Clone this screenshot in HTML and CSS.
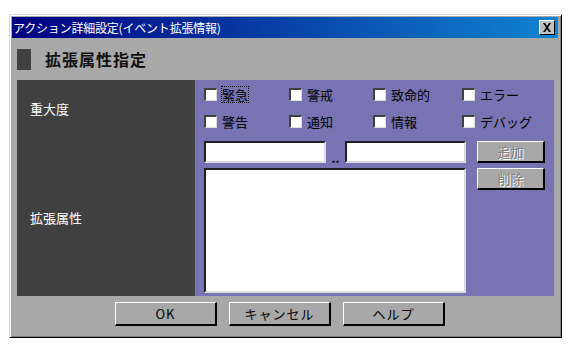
FILE: index.html
```html
<!DOCTYPE html>
<html lang="ja">
<head>
    <meta charset="UTF-8">
    <title>アクション詳細設定(イベント拡張情報)</title>
    <link rel="stylesheet" href="styles.css">
</head>
<body>
    <div class="dialog">
        <div class="titlebar">
            <span class="title">アクション詳細設定(イベント拡張情報)</span>
            <span class="close">
                <svg width="10" height="9" viewBox="0 0 10 9"><path d="M1 0h2l2 3 2-3h2L6 4.5 9 9H7L5 6 3 9H1l3-4.5z" fill="#000"/></svg>
            </span>
        </div>
        <div class="section-head">
            <span class="marker"></span>
            <span class="section-title">拡張属性指定</span>
        </div>
        <div class="table">
            <div class="row row-severity">
                <div class="label">重大度</div>
                <div class="cell checks">
                    <label class="check"><span class="box"></span><span class="focus">緊急</span></label>
                    <label class="check"><span class="box"></span><span>警戒</span></label>
                    <label class="check"><span class="box"></span><span>致命的</span></label>
                    <label class="check"><span class="box"></span><span>エラー</span></label>
                    <label class="check"><span class="box"></span><span>警告</span></label>
                    <label class="check"><span class="box"></span><span>通知</span></label>
                    <label class="check"><span class="box"></span><span>情報</span></label>
                    <label class="check"><span class="box"></span><span>デバッグ</span></label>
                </div>
            </div>
            <div class="row row-attr">
                <div class="label">拡張属性</div>
                <div class="cell attr">
                    <div class="fields">
                        <div class="range">
                            <span class="field input-a"></span>
                            <span class="dots">..</span>
                            <span class="field input-b"></span>
                        </div>
                        <div class="field list"></div>
                    </div>
                    <div class="side-buttons">
                        <button class="btn small" disabled>追加</button>
                        <button class="btn small" disabled>削除</button>
                    </div>
                </div>
            </div>
        </div>
        <div class="footer">
            <button class="btn wide">OK</button>
            <button class="btn wide">キャンセル</button>
            <button class="btn wide">ヘルプ</button>
        </div>
    </div>
</body>
</html>
```

FILE: styles.css
```css
body {
    margin: 0;
    background: #fff;
    font-family: "Noto Sans CJK JP", "Noto Sans", sans-serif;
}
.dialog {
    margin: 14px 0 0 9px;
    width: 553px;
    height: 324px;
    box-sizing: border-box;
    background: #a8a8a8;
    border-left: 1px solid #d8d8d8;
    border-top: 1px solid #d8d8d8;
    border-right: 1px solid #000;
    border-bottom: 1px solid #000;
    box-shadow: inset 1px 1px 0 #fff, inset -1px -1px 0 #808080;
    padding: 2px 3px 0 2px;
}
.titlebar {
    height: 21px;
    display: flex;
    align-items: center;
    justify-content: space-between;
    background: linear-gradient(to right, #000080, #1084d0);
    padding: 0 3px 0 1px;
}
.title {
    color: #fff;
    font-size: 12px;
    letter-spacing: -0.2px;
    line-height: 21px;
}
.close {
    width: 16px;
    height: 15px;
    box-sizing: border-box;
    background: #c0c0c0;
    border-left: 1px solid #fff;
    border-top: 1px solid #fff;
    border-right: 1px solid #000;
    border-bottom: 1px solid #000;
    display: flex;
    align-items: center;
    justify-content: center;
}
.section-head {
    height: 42px;
    display: flex;
    align-items: center;
    padding-left: 5px;
}
.marker {
    width: 14px;
    height: 21px;
    background: #404040;
}
.section-title {
    margin-left: 14px;
    font-size: 16px;
    font-weight: bold;
    letter-spacing: 1px;
    color: #111;
}
.table {
    margin-left: 5px;
    width: 537px;
}
.row {
    display: grid;
    grid-template-columns: 178px 1fr;
}
.row-severity {
    height: 55px;
}
.row-attr {
    height: 157px;
    margin-top: 4px;
}
.label {
    background: #404040;
    color: #fff;
    font-size: 13px;
    padding-left: 13px;
    display: flex;
    align-items: center;
}
.row-severity .label {
    padding-bottom: 3px;
}
.cell {
    background: #7874b4;
}
.checks {
    display: grid;
    grid-template-columns: 85px 84px 89px 1fr;
    grid-auto-rows: 27px;
    padding: 6px 0 0 9px;
}
.check {
    display: flex;
    align-items: center;
    gap: 5px;
    font-size: 13px;
    color: #000;
    height: 16px;
}
.box {
    width: 13px;
    height: 13px;
    box-sizing: border-box;
    background: #fff;
    border-left: 2px solid #404040;
    border-top: 2px solid #404040;
    border-right: 1px solid #dcdcdc;
    border-bottom: 1px solid #dcdcdc;
}
.focus {
    outline: 1px dotted #000;
    outline-offset: 0;
    line-height: 15px;
}
.attr {
    display: flex;
    padding: 2px 0 0 9px;
}
.fields {
    width: 262px;
}
.range {
    display: flex;
    align-items: flex-end;
    height: 23px;
}
.field {
    display: block;
    box-sizing: border-box;
    background: #fff;
    border-left: 2px solid #202020;
    border-top: 2px solid #202020;
    border-right: 2px solid #dcdcdc;
    border-bottom: 2px solid #dcdcdc;
}
.input-a {
    width: 122px;
    height: 22px;
    align-self: flex-start;
}
.input-b {
    width: 121px;
    height: 22px;
    align-self: flex-start;
}
.dots {
    width: 19px;
    text-align: center;
    font-size: 12px;
    line-height: 12px;
    font-weight: bold;
    color: #000;
}
.list {
    margin-top: 4px;
    height: 125px;
}
.side-buttons {
    margin-left: 11px;
    display: flex;
    flex-direction: column;
    gap: 5px;
}
.btn {
    box-sizing: border-box;
    background: #a8a8a8;
    border: none;
    border-left: 1px solid #fff;
    border-top: 1px solid #fff;
    border-right: 2px solid #000;
    border-bottom: 2px solid #000;
    font-family: "Noto Sans CJK JP", "Noto Sans", sans-serif;
    font-size: 13px;
    color: #000;
    padding: 0;
}
.small {
    width: 68px;
    height: 22px;
    color: #808080;
    text-shadow: 1px 1px 0 #fff;
    line-height: 18px;
}
.footer {
    display: flex;
    gap: 12px;
    padding: 6px 0 0 103px;
}
.wide {
    width: 102px;
    height: 24px;
    letter-spacing: 1px;
}
```
